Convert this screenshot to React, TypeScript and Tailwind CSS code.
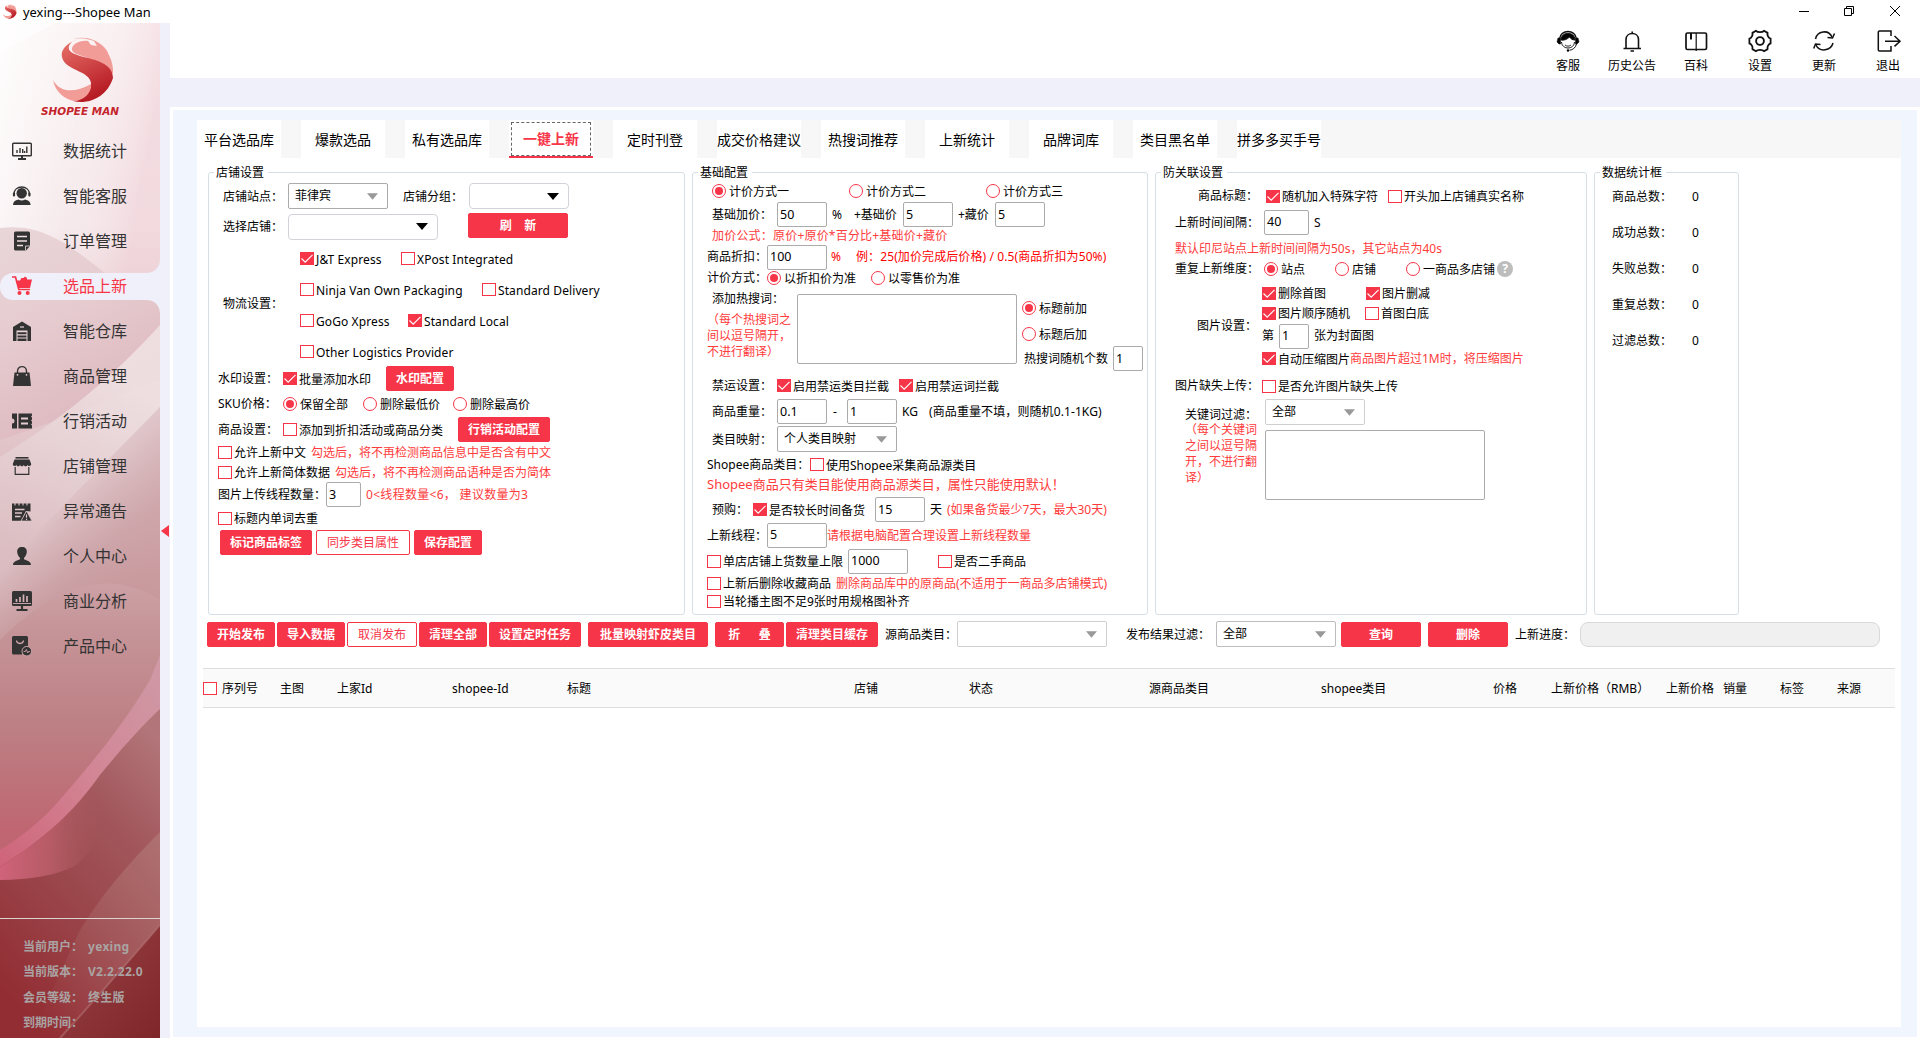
import React from "react";

type Kids = { children?: React.ReactNode; className?: string };

const Row = ({ className = "", children }: Kids) => (
  <div className={`flex shrink-0 items-center ${className}`}>{children}</div>
);

const T = ({ className = "", children }: Kids) => (
  <span className={`block shrink-0 whitespace-pre ${className}`}>{children}</span>
);

const Red = ({ className = "", children }: Kids) => (
  <span className={`block shrink-0 whitespace-pre text-[#ff3b3b] ${className}`}>{children}</span>
);

const Box = ({ on }: { on?: boolean }) => (
  <span
    className={`block h-[13px] w-[14px] shrink-0 border border-[#f73548] ${on ? "bg-[#f73548]" : "bg-white"}`}
  >
    {on && (
      <svg viewBox="0 0 12 11" className="block h-[11px] w-[12px]" fill="none" stroke="#fff" strokeWidth="1.1">
        <path d="M0.500 5.500 4.200 9.200 11.500 1.800" />
      </svg>
    )}
  </span>
);

const Check = ({ on, className = "", children }: Kids & { on?: boolean }) => (
  <label className={`flex shrink-0 items-center gap-[2px] whitespace-pre ${className}`}>
    <Box on={on} />
    <span className="relative top-px">{children}</span>
  </label>
);

const Radio = ({ on, className = "", children }: Kids & { on?: boolean }) => (
  <label className={`flex shrink-0 items-center gap-[3px] whitespace-pre ${className}`}>
    <span className="flex size-[14px] shrink-0 items-center justify-center rounded-full border border-[#f73548] bg-white">
      {on && <span className="block size-[8px] rounded-full bg-[#f73548]" />}
    </span>
    <span className="relative top-px">{children}</span>
  </label>
);

const Input = ({ className = "", children }: Kids) => (
  <span
    className={`flex h-[25px] shrink-0 items-center rounded-[2px] border border-[#ababab] bg-white pl-[2px] text-[12.5px] ${className}`}
  >
    {children}
  </span>
);

const Select = ({
  dark,
  className = "",
  border = "border-[#ababab]",
  children,
}: Kids & { dark?: boolean; border?: string }) => (
  <span
    className={`flex h-[26px] shrink-0 items-center justify-between rounded-[2px] border bg-white pr-[9px] pl-[6px] whitespace-pre ${border} ${className}`}
  >
    <span>{children}</span>
    <svg viewBox="0 0 12 7" className={dark ? "h-[7px] w-[12px]" : "h-[7px] w-[11px]"}>
      <path d="M0 0h12L6 7z" fill={dark ? "#000" : "#999"} />
    </svg>
  </span>
);

const Btn = ({ ghost, className = "", children }: Kids & { ghost?: boolean }) => (
  <button
    className={`flex h-[25px] shrink-0 items-center justify-center rounded-[2px] border border-[#f73548] pt-px whitespace-pre ${
      ghost ? "bg-white text-[#f73548]" : "bg-[#f73548] font-bold text-white"
    } ${className}`}
  >
    {children}
  </button>
);

const Panel = ({ title, className = "", children }: Kids & { title: string }) => (
  <section className={`relative flex h-[443px] shrink-0 flex-col rounded-[3px] border border-[#d5dfe5] ${className}`}>
    <h2 className="absolute -top-[8px] left-[5px] bg-white pr-[4px] pl-[2px] leading-4">{title}</h2>
    {children}
  </section>
);

const S_MARK = (
  <>
    <path d="M20 1C28-1 36 1 41 3L44 8 38 7 35 3C26 2 18 7 19 12 21 19 41 17 53 32 54 30 60 17 51 9 42 0 30-2 20 1Z" fill="#f29c98" />
    <path d="M24 6C30 2 34 4 37 7L46 10 42 4C54 10 61 22 60 36 53 25 44 21 36 19 26 16 17 12 24 6Z" fill="#f29c98" />
    <path d="M28 0C15 4 5 12 10 22 16 33 36 33 38 45 39 54 30 62 20 63 36 67 54 59 60 40 60 27 46 23 35 20 22 17 14 14 16 8 18 3 24 1 28 0Z" fill="url(#sred)" />
    <path d="M0 42C7 55 22 55 38 46 39 55 30 63 21 63 11 61 2 53 0 42Z" fill="#f29c98" />
  </>
);

const Logo = ({ className = "" }: { className?: string }) => (
  <svg viewBox="0 -1 62 66" className={className}>
    <defs>
      <linearGradient id="sred" x1="0" y1="0" x2="0.4" y2="1">
        <stop offset="0" stopColor="#ea756c" />
        <stop offset="1" stopColor="#b71c25" />
      </linearGradient>
    </defs>
    {S_MARK}
  </svg>
);

const D = "#333333";
const navIcons: Record<string, React.ReactNode> = {
  stats: (
    <g fill="none" stroke={D} strokeWidth="1.4">
      <rect x="0.7" y="2.2" width="18.6" height="12.6" rx="0.8" />
      <path d="M5 12V9M8 12V7M10.700 12V8M14.800 12V5.500M12.600 12v-2" />
      <path d="M6 18h8M10 15v3" strokeWidth="2" />
    </g>
  ),
  service: (
    <g fill={D}>
      <circle cx="9.700" cy="7.300" r="5.200" />
      <path d="M1.800 8.500C1.500-1.500 17.900-1.500 17.600 8.500" fill="none" stroke={D} strokeWidth="1.300" />
      <rect x="0.900" y="6.500" width="2.200" height="4" rx="1" />
      <rect x="16.300" y="6.500" width="2.200" height="4" rx="1" />
      <path d="M1 19c0-3 2-5 5.500-5.500 2 1.200 4.500 1.200 6.500 0C16.500 14 18.600 16 18.600 19z" />
    </g>
  ),
  order: (
    <g>
      <path d="M3.500.5h13a1.500 1.500 0 0 1 1.500 1.500v13l-4 4.500H3.500A1.500 1.500 0 0 1 2 18V2A1.500 1.500 0 0 1 3.500.5z" fill={D} />
      <path d="M5 5.500h10M5 10h10M5 14.500h6" stroke="#f0e0e3" strokeWidth="1.600" />
      <path d="M13.500 19.500v-4.500H18" stroke="#f0e0e3" strokeWidth="0.800" fill="none" />
    </g>
  ),
  cart: (
    <g fill="#f73548">
      <path d="M0 1h3.500l3.300 12.500H18" fill="none" stroke="#f73548" strokeWidth="1.700" />
      <path d="M4 4.500h4L9.500 2h2L13 .5 15 2v1.500h5L18 12H6.500z" />
      <circle cx="7.500" cy="17" r="2" />
      <circle cx="15.700" cy="17" r="2" />
    </g>
  ),
  house: (
    <g>
      <path d="M10 .5 19 6v14H1V6z" fill={D} />
      <path d="M4.500 20V9.500h11V20z" fill="#e9d4d7" />
      <path d="M5.500 11.200h9v2h-9zM5.500 14.400h9v2h-9zM5.500 17.600h9v2.400h-9z" fill={D} />
      <path d="M8 6h4" stroke="#e9d4d7" strokeWidth="1.200" />
    </g>
  ),
  bag: (
    <g>
      <path d="M2.500 6.500h15L19 20H1z" fill={D} />
      <path d="M5.500 9V5.500C5.500-1 14.500-1 14.500 5.500V9" fill="none" stroke={D} strokeWidth="1.400" />
      <circle cx="5.500" cy="8.800" r=".9" fill="#e9d0d4" />
      <circle cx="14.500" cy="8.800" r=".9" fill="#e9d0d4" />
    </g>
  ),
  ticket: (
    <g fill={D}>
      <path d="M0 2.500h5v15H0v-5a2.500 2.500 0 0 0 0-5z" />
      <path d="M6.500 2.500H20v2l-1 1 1 1v2l-1 1 1 1v2l-1 1 1 1v3H6.500z" />
      <path d="M9 7.500h7M9 12.500h7" stroke="#e6cdd1" strokeWidth="1.800" />
    </g>
  ),
  shop: (
    <g>
      <path d="M3.500 1h13v1.600h-13z" fill={D} />
      <path d="M2.500 3.500h15L19.200 8c0 2.500-3.300 2.500-3.600.7-.6 2-3.300 2-3.800 0-.6 2-3.100 2-3.700 0-.5 2-3.200 2-3.800 0C3.900 10.500.8 10.500.8 8z" fill={D} />
      <path d="M3.200 11v7.300h13.600V11" fill="none" stroke={D} strokeWidth="1.200" />
    </g>
  ),
  warn: (
    <g>
      <path d="M0 2.500h18.500v8L14 10 9 19.800H0z" fill={D} />
      <path d="M3 0v4.500M7 0v4.500M11 0v4.500M15 0v4.500" stroke="#e0c5c9" strokeWidth="1.100" />
      <path d="M3 8.500h9.500M3 12h7M3 15.500h5.500" stroke="#e0c5c9" strokeWidth="1.300" />
      <path d="M14.500 10 20 20H9z" fill={D} stroke="#e0c5c9" strokeWidth=".7" />
      <path d="M14.500 13.500v3.200M14.500 17.700v1.200" stroke="#e0c5c9" strokeWidth="1.200" />
    </g>
  ),
  person: (
    <g fill={D}>
      <path d="M10 1c3.300 0 5 2 4.800 5-.2 2.700-1.600 5-2.800 5.800v1.400c3 1.300 7 2 7 5.800H1c0-3.800 4-4.500 7-5.800v-1.400C6.800 11 5.400 8.700 5.200 6 5 3 6.700 1 10 1z" />
    </g>
  ),
  biz: (
    <g>
      <rect x="0" y="0" width="20" height="15" rx="1.500" fill={D} />
      <path d="M4.500 11V8M8 11V6M11.500 11V3.500M15 11V5" stroke="#d5b0b5" strokeWidth="1.700" />
      <path d="M1 12.500h18" stroke="#d5b0b5" strokeWidth=".9" />
      <path d="M10 15v3.500M4.500 19h11" stroke={D} strokeWidth="2.200" />
    </g>
  ),
  product: (
    <g>
      <path d="M1.500 0h13A1.500 1.500 0 0 1 16 1.500V10l-6 8.500H1.500A1.500 1.500 0 0 1 0 17V1.500A1.500 1.500 0 0 1 1.500 0z" fill={D} />
      <path d="M4.500 4.500c.5 4 6.500 4 7 0" fill="none" stroke="#d3a8ae" strokeWidth="1.300" />
      <circle cx="14.800" cy="15.200" r="4.800" fill={D} stroke="#cfa3a8" strokeWidth="1" />
      <path d="M11.700 15.500h1.600l1-2 1.400 3.500.9-1.500h1.500" fill="none" stroke="#cfa3a8" strokeWidth=".9" />
    </g>
  ),
};

const nav = [
  { t: "数据统计", i: "stats" },
  { t: "智能客服", i: "service" },
  { t: "订单管理", i: "order" },
  { t: "选品上新", i: "cart", active: true },
  { t: "智能仓库", i: "house" },
  { t: "商品管理", i: "bag" },
  { t: "行销活动", i: "ticket" },
  { t: "店铺管理", i: "shop" },
  { t: "异常通告", i: "warn" },
  { t: "个人中心", i: "person" },
  { t: "商业分析", i: "biz" },
  { t: "产品中心", i: "product" },
];

const account = [
  ["当前用户：", "yexing"],
  ["当前版本：", "V2.2.22.0"],
  ["会员等级：", "终生版"],
  ["到期时间：", ""],
];

/* Silk-like red artwork behind the navigation */
const SidebarArt = () => (
  <svg viewBox="0 23 160 1015" preserveAspectRatio="none" className="absolute inset-0 h-full w-full">
    <defs>
      <linearGradient id="base" x1="0" y1="0" x2="0" y2="1">
        <stop offset="0" stopColor="#faf0f1" />
        <stop offset="0.22" stopColor="#f3e4e7" />
        <stop offset="0.3" stopColor="#e8ced2" />
        <stop offset="0.42" stopColor="#e2c6ca" />
        <stop offset="0.52" stopColor="#d3adb2" />
        <stop offset="0.6" stopColor="#c6969a" />
        <stop offset="0.7" stopColor="#bd8084" />
        <stop offset="0.8" stopColor="#bf6672" />
        <stop offset="1" stopColor="#c0606e" />
      </linearGradient>
      <linearGradient id="top" x1="0" y1="0" x2="1" y2="0.3">
        <stop offset="0" stopColor="#fff" stopOpacity=".9" />
        <stop offset="0.6" stopColor="#fff" stopOpacity=".2" />
        <stop offset="1" stopColor="#f0cfd6" stopOpacity=".5" />
      </linearGradient>
      <linearGradient id="wave" x1="0" y1="0" x2="0.4" y2="1">
        <stop offset="0" stopColor="#e9d6d8" />
        <stop offset="0.45" stopColor="#e6ccd0" />
        <stop offset="1" stopColor="#ddb8be" />
      </linearGradient>
      <linearGradient id="band" x1="0.7" y1="0.2" x2="0.4" y2="1">
        <stop offset="0" stopColor="#efe1e3" stopOpacity=".9" />
        <stop offset="1" stopColor="#e0c6ca" stopOpacity=".7" />
      </linearGradient>
      <linearGradient id="fold" x1="0.3" y1="0.2" x2="0.75" y2="0.95">
        <stop offset="0" stopColor="#eadadc" />
        <stop offset="0.3" stopColor="#dcc0c4" stopOpacity=".95" />
        <stop offset="0.6" stopColor="#cba2a6" stopOpacity=".7" />
        <stop offset="1" stopColor="#bf8489" stopOpacity=".2" />
      </linearGradient>
      <linearGradient id="pink" x1="1" y1="0" x2="0" y2="1">
        <stop offset="0" stopColor="#cf9aa6" />
        <stop offset="0.5" stopColor="#d28595" />
        <stop offset="1" stopColor="#cf6479" />
      </linearGradient>
      <linearGradient id="dark" x1="0.8" y1="0" x2="0.3" y2="1">
        <stop offset="0" stopColor="#b27579" />
        <stop offset="0.3" stopColor="#a2575c" />
        <stop offset="0.6" stopColor="#9a464b" />
        <stop offset="1" stopColor="#922d33" />
      </linearGradient>
      <linearGradient id="glow" x1="0" y1="0" x2="1" y2="0">
        <stop offset="0" stopColor="#d0637a" />
        <stop offset="0.45" stopColor="#bd606c" stopOpacity=".8" />
        <stop offset="0.9" stopColor="#a8585f" stopOpacity="0" />
      </linearGradient>
      <linearGradient id="beam" x1="1" y1="0" x2="0.2" y2="1">
        <stop offset="0" stopColor="#b98582" stopOpacity=".5" />
        <stop offset="1" stopColor="#b98582" stopOpacity="0" />
      </linearGradient>
      <linearGradient id="corner" x1="0" y1="0" x2="1" y2="1">
        <stop offset="0" stopColor="#9a4348" />
        <stop offset="1" stopColor="#7e2629" />
      </linearGradient>
    </defs>
    <rect width="160" height="1038" fill="url(#base)" />
    <rect width="160" height="275" fill="url(#top)" />
    <path d="M0 52 55 23H0z" fill="#fff" opacity=".6" />
    <path d="M0 228C45 222 75 250 105 273H160V380C110 400 60 420 0 440z" fill="url(#wave)" />
    <path d="M160 325C110 380 60 420 0 457V572L160 407z" fill="url(#band)" />
    <path d="M160 407 0 570V640C40 600 100 560 160 600z" fill="url(#fold)" />
    <path d="M160 655 150 680C120 730 90 765 57 803 40 822 20 838 0 850V867C50 835 75 810 100 775 125 745 140 728 160 709z" fill="url(#pink)" />
    <path d="M160 709C140 728 125 745 100 775 75 810 50 835 0 867V1038H160z" fill="url(#dark)" />
    <path d="M110 763C75 810 50 835 0 867V880C30 880 55 875 73 867 100 850 120 800 110 763z" fill="url(#glow)" />
    <path d="M160 832C130 862 105 890 80 930L30 1038H62L160 925z" fill="url(#beam)" />
    <path d="M160 925C130 960 90 1005 60 1038H160z" fill="url(#corner)" />
    <path d="M160 925C130 960 90 1005 60 1038" fill="none" stroke="#b8797a" strokeOpacity=".5" strokeWidth="2" />
  </svg>
);

const Sidebar = () => (
  <aside className="relative h-[1015px] w-[160px] shrink-0 overflow-hidden">
    <SidebarArt />
    <div className="relative flex h-full flex-col">
      <div className="flex h-[105px] shrink-0 flex-col pt-[14px] pl-[53px]">
        <Logo className="h-[66px] w-[62px] shrink-0" />
        <svg className="mt-[2px] -ml-[14px] h-[13px] w-[84px] shrink-0" viewBox="0 0 84 13">
          <text
            x="2"
            y="10.300"
            textLength="78"
            lengthAdjust="spacingAndGlyphs"
            className="fill-[#c4242c] font-['DejaVu_Sans'] text-[10.500px] font-bold italic"
          >
            SHOPEE MAN
          </text>
        </svg>
      </div>
      <nav className="flex flex-col">
        {nav.map((n) => (
          <div key={n.t} className="relative flex h-[45px] shrink-0 items-center">
            {n.active && (
              <>
                <div className="absolute top-[10px] left-0 h-[27px] w-full rounded-l-[13px] bg-[#f0f0fa]" />
                <svg viewBox="0 0 14 55" className="absolute -top-[4px] right-0 h-[55px] w-[14px]">
                  <path d="M14 0v14H0C9 14 14 8 14 0zM0 41h14v14C14 47 9 41 0 41z" fill="#f0f0fa" />
                </svg>
              </>
            )}
            <svg viewBox="0 0 20 20" className="relative ml-[12px] h-[20px] w-[20px] overflow-visible">
              {navIcons[n.i]}
            </svg>
            <span className={`relative ml-[31px] text-[16px] leading-6 ${n.active ? "text-[#f73548]" : "text-[#333]"}`}>
              {n.t}
            </span>
          </div>
        ))}
      </nav>
      <div className="mt-auto h-[120px] shrink-0 border-t border-[#dcd3d3] pt-[15px]">
        {account.map(([k, v]) => (
          <div key={k} className="flex h-[25.500px] items-center pl-[23px] font-bold text-[#aaa3a3]">
            <span className="w-[65px] whitespace-pre">{k}</span>
            <span className="tracking-[0.3px]">{v}</span>
          </div>
        ))}
      </div>
    </div>
  </aside>
);

const topIcons: { t: string; g: React.ReactNode }[] = [
  {
    t: "客服",
    g: (
      <>
        <path d="M2.500 9C3.500-1 18.500-1 19.500 9" strokeWidth="1.400" />
        <path d="M4 10C4 1 18 1 18 10 15 10 13.500 8.500 12.500 7 10 9.500 7 10.500 4 10z" fill="#000" />
        <path d="M1 8h2.500v6H2L0 12zM21 8h-2.500v6H20l2-2z" fill="#000" strokeWidth=".6" />
        <path d="M4.500 12c.5 8 12.500 8 13 0" strokeWidth="1" />
        <path d="M8 15c2 1.500 4 1.500 6 0" strokeWidth=".9" />
        <path d="M19.500 14c-1 4-4 6-7 6.200" strokeWidth="1" />
        <circle cx="11" cy="20.500" r="1.200" fill="#000" stroke="none" />
      </>
    ),
  },
  {
    t: "历史公告",
    g: <path d="M2.500 18.500h17.500M5 18.500V9.500C5 1.500 17.500 1.500 17.500 9.500V18.500M11.200 3.500V1.500M9.500 21h3.500" strokeWidth="1.600" />,
  },
  {
    t: "百科",
    g: (
      <>
        <rect x="1" y="3" width="20.500" height="16.500" rx="1.500" strokeWidth="1.700" />
        <path d="M11.200 3v18" strokeWidth="1.200" />
        <path d="M6 3v6.500" strokeWidth="2" />
      </>
    ),
  },
  {
    t: "设置",
    g: (
      <>
        <path d="M7 .8C8.500 2.600 13.500 2.600 15 .8L18.600 2.900C17.900 5.200 19.500 7.800 21.600 8.600V13.400C19.500 14.200 17.900 16.800 18.600 19.100L15 21.200C13.500 19.400 8.500 19.400 7 21.200L3.400 19.100C4.100 16.800 2.500 14.200.4 13.400V8.600C2.500 7.800 4.100 5.200 3.400 2.900z" strokeWidth="1.800" strokeLinejoin="round" />
        <circle cx="11" cy="11" r="3.900" strokeWidth="1.900" />
      </>
    ),
  },
  {
    t: "更新",
    g: (
      <>
        <path d="M2.500 9C4 1 15.500-1 19 7M20 13c-2 8-13.500 9.500-17 2" strokeWidth="1.500" />
        <path d="m14.500 7.500 5 .5 2-4.500M7.500 14.500l-5-.5-1.800 4.500" strokeWidth="1.500" />
      </>
    ),
  },
  {
    t: "退出",
    g: (
      <>
        <path d="M14 6V1H2.500a1.200 1.200 0 0 0-1.200 1.200v17.600A1.200 1.200 0 0 0 2.500 21H14v-5" strokeWidth="1.500" />
        <path d="M8 11.200h15M17.500 6l5.500 5.200-5.500 5.200" strokeWidth="1.500" />
      </>
    ),
  },
];

const tabs = [
  "平台选品库",
  "爆款选品",
  "私有选品库",
  "一键上新",
  "定时刊登",
  "成交价格建议",
  "热搜词推荐",
  "上新统计",
  "品牌词库",
  "类目黑名单",
  "拼多多买手号",
];

const ShopPanel = () => (
  <Panel title="店铺设置" className="w-[477px] pt-[10px] pl-[9px]">
    <Row className="h-[26px] pl-[5px]">
      <T className="w-[65px] pt-px">店铺站点：</T>
      <Select className="w-[100px]">菲律宾</Select>
      <T className="ml-[15px] w-[66px] pt-px">店铺分组：</T>
      <Select dark border="border-[#d2d2d9]" className="w-[100px] rounded-[4px]" />
    </Row>
    <Row className="mt-[4px] h-[27px] pl-[5px]">
      <T className="w-[65px]">选择店铺：</T>
      <Select dark border="border-[#d2d2d9]" className="w-[150px] rounded-[4px]" />
      <Btn className="mt-[-2px] ml-[30px] w-[100px]">{"刷    新"}</Btn>
    </Row>
    <Row className="mt-[3px] -mb-px h-[124px] pl-[5px] tracking-[0.1px]">
      <T className="-mt-[2px] w-[77px] tracking-normal">物流设置：</T>
      <div className="flex flex-col">
        <Row className="h-[31px]">
          <Check on className="w-[101px]">J&amp;T Express</Check>
          <Check>XPost Integrated</Check>
        </Row>
        <Row className="h-[31px]">
          <Check className="w-[182px]">Ninja Van Own Packaging</Check>
          <Check>Standard Delivery</Check>
        </Row>
        <Row className="h-[31px]">
          <Check className="w-[108px]">GoGo Xpress</Check>
          <Check on>Standard Local</Check>
        </Row>
        <Row className="h-[31px]">
          <Check>Other Logistics Provider</Check>
        </Row>
      </div>
    </Row>
    <Row className="h-[25px]">
      <T className="w-[65px]">水印设置：</T>
      <Check on className="w-[103px]">批量添加水印</Check>
      <Btn className="w-[68px]">水印配置</Btn>
    </Row>
    <Row className="h-[26px]">
      <T className="w-[65px]">SKU价格：</T>
      <Radio on className="w-[80px]">保留全部</Radio>
      <Radio className="w-[90px]">删除最低价</Radio>
      <Radio>删除最高价</Radio>
    </Row>
    <Row className="h-[25px]">
      <T className="w-[65px] pt-px">商品设置：</T>
      <Check className="w-[175px]">添加到折扣活动或商品分类</Check>
      <Btn className="w-[92px]">行销活动配置</Btn>
    </Row>
    <Row className="h-[20px]">
      <Check className="w-[93px]">允许上新中文</Check>
      <Red className="pt-px">勾选后，将不再检测商品信息中是否含有中文</Red>
    </Row>
    <Row className="h-[20px]">
      <Check className="w-[117px]">允许上新简体数据</Check>
      <Red className="pt-px">勾选后，将不再检测商品语种是否为简体</Red>
    </Row>
    <Row className="h-[25px]">
      <T className="w-[108px]">图片上传线程数量：</T>
      <Input className="w-[35px]">3</Input>
      <Red className="ml-[5px] tracking-[0.3px]">0&lt;线程数量&lt;6， 建议数量为3</Red>
    </Row>
    <Row className="h-[22px]">
      <Check>标题内单词去重</Check>
    </Row>
    <Row className="h-[26px] gap-[4px] pl-[2px]">
      <Btn className="w-[92px]">标记商品标签</Btn>
      <Btn ghost className="w-[94px]">同步类目属性</Btn>
      <Btn className="w-[68px]">保存配置</Btn>
    </Row>
  </Panel>
);

const BasePanel = () => (
  <Panel title="基础配置" className="w-[456px] pt-[7px] pl-[14px]">
    <Row className="h-[22px] pl-[5px]">
      <Radio on className="w-[137px]">计价方式一</Radio>
      <Radio className="w-[137px]">计价方式二</Radio>
      <Radio>计价方式三</Radio>
    </Row>
    <Row className="h-[25px] pl-[5px]">
      <T className="w-[65px]">基础加价：</T>
      <Input className="w-[50px]">50</Input>
      <T className="w-[27px] pl-[5px]">%</T>
      <T className="w-[49px]">+基础价</T>
      <Input className="w-[50px]">5</Input>
      <T className="w-[42px] pl-[5px]">+藏价</T>
      <Input className="w-[50px]">5</Input>
    </Row>
    <Row className="h-[17px] pl-[5px]">
      <Red className="tracking-[0.2px]">加价公式：原价+原价*百分比+基础价+藏价</Red>
    </Row>
    <Row className="h-[26px]">
      <T className="w-[60px]">商品折扣：</T>
      <Input className="w-[60px]">100</Input>
      <T className="w-[29px] pl-[4px] text-[#f00]">%</T>
      <T className="text-[#f00] tracking-[0.1px]">例：25(加价完成后价格) / 0.5(商品折扣为50%)</T>
    </Row>
    <Row className="h-[16px]">
      <T className="w-[60px]">计价方式：</T>
      <Radio on className="w-[104px]">以折扣价为准</Radio>
      <Radio>以零售价为准</Radio>
    </Row>
    <div className="flex h-[90px] shrink-0">
      <div className="w-[90px] pt-[5px]">
        <p className="pl-[5px] leading-4">添加热搜词：</p>
        <p className="mt-[5px] whitespace-pre leading-4 text-[#ff3b3b]">{"（每个热搜词之\n间以逗号隔开，\n不进行翻译）"}</p>
      </div>
      <div className="mt-[8px] h-[70px] w-[220px] rounded-[2px] border border-[#ababab] bg-white" />
      <div className="flex flex-col pt-[9px] pl-[5px]">
        <Row className="h-[26px]">
          <Radio on>标题前加</Radio>
        </Row>
        <Row className="h-[26px]">
          <Radio>标题后加</Radio>
        </Row>
        <Row className="-mt-px h-[25px] pl-[2px]">
          <T className="w-[89px]">热搜词随机个数</T>
          <Input className="w-[30px]">1</Input>
        </Row>
      </div>
    </div>
    <Row className="h-[19px] pl-[5px]">
      <T className="w-[65px]">禁运设置：</T>
      <Check on className="w-[122px]">启用禁运类目拦截</Check>
      <Check on>启用禁运词拦截</Check>
    </Row>
    <Row className="mt-[4px] h-[25px] pl-[5px]">
      <T className="w-[65px]">商品重量：</T>
      <Input className="w-[50px]">0.1</Input>
      <T className="w-[20px] pl-[6px]">-</T>
      <Input className="w-[50px]">1</Input>
      <T className="w-[32px] pl-[5px]">KG</T>
      <T className="tracking-[0.1px]">(商品重量不填，则随机0.1-1KG)</T>
    </Row>
    <Row className="mt-[2px] h-[26px] pl-[5px]">
      <T className="w-[65px] pt-px">类目映射：</T>
      <Select className="w-[120px]">个人类目映射</Select>
    </Row>
    <Row className="h-[25px]">
      <T className="w-[103px]">Shopee商品类目：</T>
      <Check>使用Shopee采集商品源类目</Check>
    </Row>
    <Row className="-mt-px mb-px h-[18px]">
      <Red className="-mt-[2px] text-[13px]">Shopee商品只有类目能使用商品源类目，属性只能使用默认！</Red>
    </Row>
    <Row className="mt-[2px] h-[25px] pl-[5px]">
      <T className="w-[41px]">预购：</T>
      <Check on className="w-[122px]">是否较长时间备货</Check>
      <Input className="w-[50px]">15</Input>
      <T className="w-[22px] pl-[5px]">天</T>
      <Red>(如果备货最少7天，最大30天)</Red>
    </Row>
    <Row className="h-[26px]">
      <T className="w-[60px] pt-px">上新线程：</T>
      <Input className="w-[60px]">5</Input>
      <Red className="pt-px">请根据电脑配置合理设置上新线程数量</Red>
    </Row>
    <Row className="h-[26px]">
      <Check className="w-[141px]">单店店铺上货数量上限</Check>
      <Input className="w-[60px]">1000</Input>
      <Check className="ml-[30px]">是否二手商品</Check>
    </Row>
    <Row className="h-[18px]">
      <Check className="w-[129px]">上新后删除收藏商品</Check>
      <Red className="pt-px">删除商品库中的原商品(不适用于一商品多店铺模式)</Red>
    </Row>
    <Row className="h-[18px]">
      <Check>当轮播主图不足9张时用规格图补齐</Check>
    </Row>
  </Panel>
);

const GuardPanel = () => (
  <Panel title="防关联设置" className="w-[432px] pt-[11px] pl-[19px]">
    <Row className="mb-px h-[24px] pl-[23px]">
      <T className="w-[68px]">商品标题：</T>
      <Check on className="w-[122px]">随机加入特殊字符</Check>
      <Check>开头加上店铺真实名称</Check>
    </Row>
    <Row className="h-[26px]">
      <T className="w-[89px] pt-px">上新时间间隔：</T>
      <Input className="w-[45px]">40</Input>
      <T className="pt-px pl-[5px]">S</T>
    </Row>
    <Row className="h-[27px]">
      <Red>默认印尼站点上新时间间隔为50s，其它站点为40s</Red>
    </Row>
    <Row className="-mt-px mb-px h-[16px]">
      <T className="w-[89px]">重复上新维度：</T>
      <Radio on className="w-[71px]">站点</Radio>
      <Radio className="w-[71px]">店铺</Radio>
      <Radio className="w-[91px]">一商品多店铺</Radio>
      <span className="flex size-[16px] shrink-0 items-center justify-center rounded-full bg-[#bdbdbd] text-[12px] leading-none font-bold text-white">
        ?
      </span>
    </Row>
    <div className="mt-[5px] mb-px flex h-[85px] shrink-0 items-center">
      <T className="w-[87px] pl-[22px]">图片设置：</T>
      <div className="flex flex-col">
        <Row className="h-[20px]">
          <Check on className="w-[104px]">删除首图</Check>
          <Check on>图片删减</Check>
        </Row>
        <Row className="h-[20px]">
          <Check on className="w-[103px]">图片顺序随机</Check>
          <Check>首图白底</Check>
        </Row>
        <Row className="h-[26px]">
          <T className="w-[17px]">第</T>
          <Input className="w-[30px]">1</Input>
          <T className="pl-[5px]">张为封面图</T>
        </Row>
        <Row className="h-[19px]">
          <Check on className="w-[88px]">自动压缩图片</Check>
          <Red className="pt-px">商品图片超过1M时，将压缩图片</Red>
        </Row>
      </div>
    </div>
    <Row className="mt-[4px] h-[26px]">
      <T className="w-[87px]">图片缺失上传：</T>
      <Check>是否允许图片缺失上传</Check>
    </Row>
    <Row className="h-[26px] pl-[10px]">
      <T className="w-[80px] pt-[5px]">关键词过滤：</T>
      <Select border="border-[#cfcfcf]" className="w-[100px] pl-[3px]">全部</Select>
    </Row>
    <div className="flex pl-[10px]">
      <p className="-mt-[3px] w-[80px] whitespace-pre leading-4 text-[#ff3b3b]">{"（每个关键词\n之间以逗号隔\n开，不进行翻\n译）"}</p>
      <div className="mt-[5px] h-[70px] w-[220px] rounded-[2px] border border-[#ababab] bg-white" />
    </div>
  </Panel>
);

const StatPanel = () => (
  <Panel title="数据统计框" className="w-[145px] pt-[6px] pl-[17px]">
    {["商品总数：", "成功总数：", "失败总数：", "重复总数：", "过滤总数："].map((s) => (
      <Row key={s} className="h-[36px]">
        <T className="w-[80px]">{s}</T>
        <T>0</T>
      </Row>
    ))}
  </Panel>
);

const columns: [string, string][] = [
  ["主图", "w-[57px]"],
  ["上家Id", "w-[115px]"],
  ["shopee-Id", "w-[115px]"],
  ["标题", "w-[287px]"],
  ["店铺", "w-[115px]"],
  ["状态", "w-[180px]"],
  ["源商品类目", "w-[172px]"],
  ["shopee类目", "w-[172px]"],
  ["价格", "w-[58px]"],
  ["上新价格（RMB）", "w-[115px]"],
  ["上新价格", "w-[57px]"],
  ["销量", "w-[57px]"],
  ["标签", "w-[57px]"],
  ["来源", "w-[57px]"],
];

export default function App() {
  return (
    <div className="flex h-[1038px] w-[1920px] flex-col overflow-hidden bg-[#f0f0fa] font-['Noto_Sans','Noto_Sans_CJK_SC',sans-serif] text-[12px] leading-4 text-black">
      <header className="flex h-[23px] shrink-0 items-center bg-white pl-[3px]">
        <Logo className="h-[15px] w-[14px]" />
        <span className="ml-[6px] text-[12.900px]">yexing---Shopee Man</span>
        <svg viewBox="0 0 102 12" className="mr-[19px] ml-auto h-[12px] w-[102px] -translate-y-px" fill="none" stroke="#000">
          <path d="M0 6.500h10M45.500 3.500h7v7h-7zM47.500 3.500v-2h7v7h-2M91 1l10 10M101 1 91 11" />
        </svg>
      </header>
      <div className="flex">
        <Sidebar />
        <div className="flex w-[10px] shrink-0 flex-col justify-start pt-[502px] pl-px">
          <svg viewBox="0 0 8 12" className="h-[12px] w-[8px]">
            <path d="M8 0v12L0 6z" fill="#f73548" />
          </svg>
        </div>
        <div className="flex h-[1015px] w-[1750px] flex-col">
          <div className="flex h-[55px] shrink-0 justify-end bg-white">
            {topIcons.map((i) => (
              <div key={i.t} className="flex w-[64px] flex-col items-center pt-[7px]">
                <svg viewBox="0 0 22 22" className="h-[22px] w-[22px] overflow-visible" fill="none" stroke="#111">
                  {i.g}
                </svg>
                <span className="mt-[6px]">{i.t}</span>
              </div>
            ))}
          </div>
          <main className="mt-[29px] flex h-[931px] shrink-0 flex-col border-[3px] border-b-[1px] border-white bg-[#f1f5fe] pt-[10px] pl-[24px]">
            <div className="flex h-[907px] w-[1704px] flex-col bg-white">
              <div className="flex h-[38px] shrink-0 gap-[20px] bg-[#f7f7f7] text-[14px]">
                {tabs.map((t) =>
                  t === "一键上新" ? (
                    <div key={t} className="flex w-[84px] flex-col border-b-2 border-[#f73548] bg-white px-[2px] pt-[2px]">
                      <div className="flex h-[34px] items-center justify-center border border-dashed border-[#666] font-bold text-[#f73548]">
                        {t}
                      </div>
                    </div>
                  ) : (
                    <div key={t} className="flex w-[84px] items-center justify-center bg-white pt-[2px] whitespace-nowrap">
                      {t}
                    </div>
                  ),
                )}
              </div>
              <div className="flex gap-[7px] pt-[14px] pl-[11px]">
                <ShopPanel />
                <BasePanel />
                <GuardPanel />
                <StatPanel />
              </div>
              <div className="mt-[6px] flex h-[26px] shrink-0 items-center pl-[10px]">
                <div className="flex gap-[2px]">
                  <Btn className="w-[68px]">开始发布</Btn>
                  <Btn className="w-[68px]">导入数据</Btn>
                  <Btn ghost className="w-[70px]">取消发布</Btn>
                  <Btn className="w-[68px]">清理全部</Btn>
                  <Btn className="w-[92px]">设置定时任务</Btn>
                </div>
                <Btn className="ml-[7px] w-[120px]">批量映射虾皮类目</Btn>
                <Btn className="ml-[7px] w-[69px]">{"折      叠"}</Btn>
                <Btn className="ml-[2px] w-[92px]">清理类目缓存</Btn>
                <T className="ml-[7px] w-[72px] pt-px">源商品类目：</T>
                <Select border="border-[#cfcfcf]" className="w-[150px]" />
                <T className="ml-[19px] w-[90px] pt-px">发布结果过滤：</T>
                <Select border="border-[#bdbdbd]" className="w-[120px]">全部</Select>
                <Btn className="ml-[5px] w-[80px]">查询</Btn>
                <Btn className="ml-[7px] w-[80px]">删除</Btn>
                <T className="ml-[7px] w-[65px] pt-px">上新进度：</T>
                <div className="h-[25px] w-[300px] rounded-[8px] border border-[#d9d9d9] bg-[#f0f0f0]" />
              </div>
              <div className="mt-[21px] ml-[6px] flex h-[40px] w-[1692px] shrink-0 items-center border-y border-[#dedede] bg-[#fafafa]">
                <Box />
                <T className="ml-[5px] w-[58px] pt-px">序列号</T>
                {columns.map(([c, w]) => (
                  <T key={c} className={`pt-px ${w}`}>
                    {c}
                  </T>
                ))}
              </div>
            </div>
          </main>
        </div>
      </div>
    </div>
  );
}
